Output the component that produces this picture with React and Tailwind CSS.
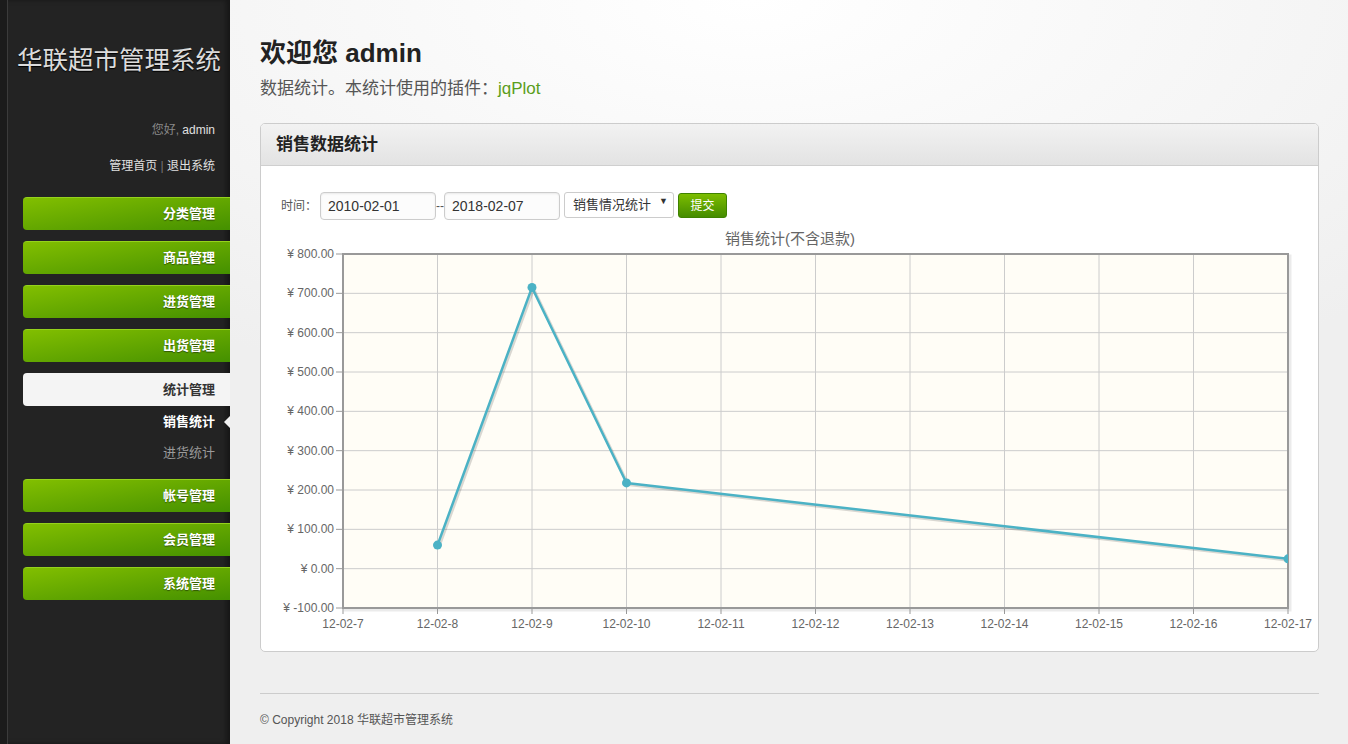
import React from 'react';

const FONT = "font-['Liberation_Sans','Noto_Sans_CJK_SC',sans-serif]";

const menu = ['分类管理', '商品管理', '进货管理', '出货管理'];
const menuAfter = ['帐号管理', '会员管理', '系统管理'];

const NavButton = ({ label }) => (
  <div className="h-[33px] mb-[11px] ml-[15px] rounded-l-[4px] flex items-center justify-end pr-[15px] text-[13px] font-bold bg-gradient-to-br from-[#82bf00] to-[#449000] border-t border-[#95d21c] text-white [text-shadow:0_1px_1px_rgba(0,0,0,0.45)]">
    {label}
  </div>
);

const Sidebar = () => (
  <div className="w-[230px] shrink-0 flex bg-[#232323] shadow-[inset_-4px_0_5px_rgba(0,0,0,0.35)]">
    <div className="w-[8px] bg-[#1b1b1b] border-r border-[#3b3b3b]" />
    <div className="flex-1 flex flex-col pt-[44px]">
      <h1 className="text-[25.5px] leading-[32px] text-[#dcdcdc] text-center whitespace-nowrap [text-shadow:0_1px_1px_#000]">
        华联超市管理系统
      </h1>
      <p className="mt-[45px] text-[12px] leading-[18px] text-right pr-[15px]">
        <span className="text-[#8a8a8a]">您好, </span>
        <span className="text-[#e0e0e0]">admin</span>
      </p>
      <p className="mt-[18px] text-[12px] leading-[18px] text-right pr-[15px] text-[#e0e0e0]">
        管理首页 <span className="text-[#777]">|</span> 退出系统
      </p>
      <div className="mt-[22px]">
        {menu.map((m) => (
          <NavButton key={m} label={m} />
        ))}
        <div className="h-[33px] ml-[15px] rounded-l-[4px] flex items-center justify-end pr-[15px] text-[13px] font-bold bg-[#f4f4f4] text-[#333]">
          统计管理
        </div>
        <div className="pb-[11px]">
          <div className="relative h-[31px] flex items-center justify-end pr-[15px] text-[13px] font-bold text-white">
            销售统计
            <span className="absolute right-0 top-1/2 -translate-y-1/2 w-0 h-0 border-y-[6px] border-y-transparent border-r-[6px] border-r-[#f3f3f3]" />
          </div>
          <div className="h-[31px] flex items-center justify-end pr-[15px] text-[13px] text-[#9a9a9a]">
            进货统计
          </div>
        </div>
        {menuAfter.map((m) => (
          <NavButton key={m} label={m} />
        ))}
      </div>
    </div>
  </div>
);

// chart geometry in page coordinates
const X0 = 343;
const X1 = 1288;
const Y0 = 254;
const Y1 = 608;
const xStep = (X1 - X0) / 10;
const yVal = (v) => Y0 + ((800 - v) / 900) * (Y1 - Y0);
const yTicks = [800, 700, 600, 500, 400, 300, 200, 100, 0, -100];
const xLabels = ['12-02-7', '12-02-8', '12-02-9', '12-02-10', '12-02-11', '12-02-12', '12-02-13', '12-02-14', '12-02-15', '12-02-16', '12-02-17'];
const data = [
  [1, 60],
  [2, 715],
  [3, 218],
  [10, 25],
];
const LABEL_FONT = 'Liberation Sans, Noto Sans CJK SC, sans-serif';

const Chart = () => {
  const pts = data.map(([i, v]) => [X0 + i * xStep, yVal(v)]);
  const d = pts.map((p, i) => `${i ? 'L' : 'M'}${p[0]},${p[1]}`).join(' ');
  const sd = pts.map((p, i) => `${i ? 'L' : 'M'}${p[0] + 1.5},${p[1] + 1.5}`).join(' ');
  return (
    <svg width="1037" height="410" viewBox="281 226 1037 410" className="block mt-[6px] -mr-[20px]">
      <defs>
        <clipPath id="plot">
          <rect x={X0} y={Y0} width={X1 - X0} height={Y1 - Y0} />
        </clipPath>
      </defs>
      <text x="790" y="244" textAnchor="middle" fontSize="15" fill="#666" fontFamily={LABEL_FONT}>
        销售统计(不含退款)
      </text>
      {/* border shadow */}
      <rect x={X0 + 2} y={Y0 + 2} width={X1 - X0} height={Y1 - Y0} fill="none" stroke="rgba(0,0,0,0.08)" strokeWidth="3" />
      <rect x={X0} y={Y0} width={X1 - X0} height={Y1 - Y0} fill="#fffdf6" />
      {yTicks.map((t) => (
        <g key={t}>
          <line x1={X0} x2={X1} y1={yVal(t)} y2={yVal(t)} stroke="#cccccc" strokeWidth="1" />
          <line x1={X0 - 7} x2={X0} y1={yVal(t)} y2={yVal(t)} stroke="#999" strokeWidth="1" />
          <text x={X0 - 9} y={yVal(t) + 4} textAnchor="end" fontSize="12" fill="#666" fontFamily={LABEL_FONT}>
            {`¥ ${t.toFixed(2)}`}
          </text>
        </g>
      ))}
      {xLabels.map((l, i) => (
        <g key={l}>
          <line x1={X0 + i * xStep} x2={X0 + i * xStep} y1={Y0} y2={Y1} stroke="#cccccc" strokeWidth="1" />
          <line x1={X0 + i * xStep} x2={X0 + i * xStep} y1={Y1} y2={Y1 + 6} stroke="#999" strokeWidth="1" />
          <text x={X0 + i * xStep} y={Y1 + 20} textAnchor="middle" fontSize="12" fill="#666" fontFamily={LABEL_FONT}>
            {l}
          </text>
        </g>
      ))}
      <rect x={X0} y={Y0} width={X1 - X0} height={Y1 - Y0} fill="none" stroke="#999999" strokeWidth="2" />
      <g clipPath="url(#plot)">
        <path d={sd} fill="none" stroke="rgba(0,0,0,0.15)" strokeWidth="3" strokeLinejoin="round" />
        <path d={d} fill="none" stroke="#4bb2c5" strokeWidth="2.5" strokeLinejoin="round" />
        {pts.map((p, i) => (
          <circle key={i} cx={p[0]} cy={p[1]} r="4.5" fill="#4bb2c5" />
        ))}
      </g>
    </svg>
  );
};

const Panel = () => (
  <div className="mt-[22px] border border-[#cccccc] rounded-[5px] bg-white overflow-hidden">
    <div className="h-[42px] bg-gradient-to-b from-[#f2f2f2] to-[#e3e3e3] border-b border-[#cfcfcf] flex items-center pl-[15px] text-[17px] font-bold text-[#222]">
      销售数据统计
    </div>
    <div className="pl-[20px] pr-[20px] pt-[26px] pb-[15px]">
      <div className="flex items-start text-[12px] text-[#555]">
        <span className="w-[39px] h-[28px] flex items-center whitespace-nowrap">时间：</span>
        <div className="w-[116px] h-[28px] border border-[#cccccc] rounded-[4px] bg-[#fcfcfc] shadow-[inset_0_1px_2px_rgba(0,0,0,0.08)] flex items-center pl-[7px] text-[14px] text-[#333]">
          2010-02-01
        </div>
        <span className="w-[8px] h-[28px] flex items-center justify-center text-[#555]">--</span>
        <div className="w-[116px] h-[28px] border border-[#cccccc] rounded-[4px] bg-[#fcfcfc] shadow-[inset_0_1px_2px_rgba(0,0,0,0.08)] flex items-center pl-[7px] text-[14px] text-[#333]">
          2018-02-07
        </div>
        <div className="ml-[4px] w-[110px] h-[26px] border border-[#cccccc] rounded-[3px] bg-white flex items-center justify-between pl-[8px] pr-[5px] text-[13px] text-[#333]">
          <span>销售情况统计</span>
          <span className="text-[9px] -mt-[6px]">▼</span>
        </div>
        <div className="ml-[4px] mt-[1px] w-[49px] h-[25px] rounded-[3px] border border-[#3f8200] bg-gradient-to-b from-[#7cbd00] to-[#458c00] flex items-center justify-center text-[12px] text-white">
          提交
        </div>
      </div>
      <Chart />
    </div>
  </div>
);

export default function App() {
  return (
    <div className={`flex min-h-screen h-[744px] ${FONT}`}>
      <Sidebar />
      <main className="flex-1 pl-[30px] pr-[29px] pt-[35px] bg-[radial-gradient(ellipse_900px_420px_at_520px_0px,#ffffff,#efefef)]">
        <h2 className="text-[26px] leading-[36px] font-bold text-[#222]">欢迎您 admin</h2>
        <p className="mt-[6px] text-[17px] leading-[24px] text-[#555]">
          数据统计。本统计使用的插件：<span className="text-[#5b9e1c]">jqPlot</span>
        </p>
        <Panel />
        <div className="mt-[41px] border-t border-[#cccccc] pt-[17px] text-[12px] leading-[18px] text-[#555]">
          © Copyright 2018 华联超市管理系统
        </div>
      </main>
    </div>
  );
}
